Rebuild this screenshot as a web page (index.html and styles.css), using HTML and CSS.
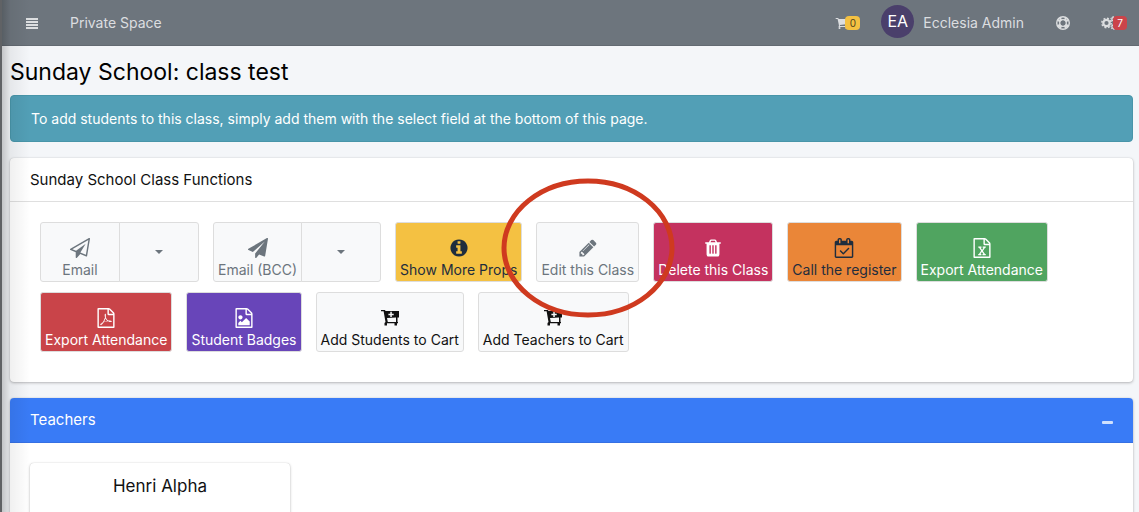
FILE: index.html
```html
<!DOCTYPE html>
<html lang="en">
<head>
<meta charset="utf-8">
<title>Sunday School: class test</title>
<link rel="stylesheet" href="styles.css">
</head>
<body>
<svg class="sprite" aria-hidden="true">
  <symbol id="plane-o" viewBox="0 0 1792 1792"><path d="M1764 11q33 24 27 64l-256 1536q-5 29-32 45-14 8-31 8-11 0-24-5l-527-215-298 327q-18 21-47 21-14 0-23-4-19-7-30-23.500t-11-36.500v-452l-472-193q-37-14-40-55-3-39 32-59l1664-960q35-21 68 2zm-342 1499l221-1323-1434 827 336 137 863-639-478 797z"/></symbol>
  <symbol id="plane" viewBox="0 0 1792 1792"><path d="M1764 11q33 24 27 64l-256 1536q-5 29-32 45-14 8-31 8-11 0-24-5l-453-185-242 295q-18 23-49 23-13 0-22-4-19-7-30.500-23.500t-11.500-36.500v-349l864-1059-1069 925-395-162q-37-14-40-55-2-40 32-59l1664-960q15-9 32-9 20 0 36 11z"/></symbol>
  <symbol id="info" viewBox="0 0 1792 1792"><path d="M1152 1376v-160q0-14-9-23t-23-9h-96v-512q0-14-9-23t-23-9h-320q-14 0-23 9t-9 23v160q0 14 9 23t23 9h96v320h-96q-14 0-23 9t-9 23v160q0 14 9 23t23 9h448q14 0 23-9t9-23zm-128-896v-160q0-14-9-23t-23-9h-192q-14 0-23 9t-9 23v160q0 14 9 23t23 9h192q14 0 23-9t9-23zm640 416q0 209-103 385.500t-279.500 279.500-385.500 103-385.500-103-279.500-279.500-103-385.500 103-385.500 279.500-279.500 385.500-103 385.500 103 279.500 279.500 103 385.500z"/></symbol>
  <symbol id="pencil" viewBox="0 0 1792 1792"><path d="M491 1536l91-91-235-235-91 91v107h128v128h107zm523-928q0-22-22-22-10 0-17 7l-542 542q-7 7-7 17 0 22 22 22 10 0 17-7l542-542q7-7 7-17zm-54-192l416 416-832 832h-416v-416zm683 96q0 53-37 90l-166 166-416-416 166-165q36-38 90-38 53 0 91 38l235 234q37 39 37 91z"/></symbol>
  <symbol id="trash" viewBox="0 0 1792 1792"><path d="M704 1376v-704q0-14-9-23t-23-9h-64q-14 0-23 9t-9 23v704q0 14 9 23t23 9h64q14 0 23-9t9-23zm256 0v-704q0-14-9-23t-23-9h-64q-14 0-23 9t-9 23v704q0 14 9 23t23 9h64q14 0 23-9t9-23zm256 0v-704q0-14-9-23t-23-9h-64q-14 0-23 9t-9 23v704q0 14 9 23t23 9h64q14 0 23-9t9-23zm-544-992h448l-48-117q-7-9-17-11h-317q-10 2-17 11zm928 32v64q0 14-9 23t-23 9h-96v948q0 83-47 143.500t-113 60.500h-832q-66 0-113-58.500t-47-141.500v-952h-96q-14 0-23-9t-9-23v-64q0-14 9-23t23-9h309l70-167q15-37 54-63t79-26h320q40 0 79 26t54 63l70 167h309q14 0 23 9t9 23z"/></symbol>
  <symbol id="calendar" viewBox="-64 0 1792 1792"><path d="M1303 964l-512 512q-10 9-23 9t-23-9l-288-288q-9-10-9-23t9-22l46-46q9-9 22-9t23 9l220 220 444-444q10-9 23-9t22 9l46 46q9 9 9 22t-9 23zm-1175 700h1408v-1024h-1408v1024zm384-1216v-288q0-14-9-23t-23-9h-64q-14 0-23 9t-9 23v288q0 14 9 23t23 9h64q14 0 23-9t9-23zm768 0v-288q0-14-9-23t-23-9h-64q-14 0-23 9t-9 23v288q0 14 9 23t23 9h64q14 0 23-9t9-23zm384-64v1280q0 52-38 90t-90 38h-1408q-52 0-90-38t-38-90v-1280q0-52 38-90t90-38h128v-96q0-66 47-113t113-47h64q66 0 113 47t47 113v96h384v-96q0-66 47-113t113-47h64q66 0 113 47t47 113v96h128q52 0 90 38t38 90z"/></symbol>
  <symbol id="excel" viewBox="0 0 1792 1792"><path d="M1596 380q28 28 48 76t20 88v1152q0 40-28 68t-68 28h-1344q-40 0-68-28t-28-68v-1600q0-40 28-68t68-28h896q40 0 88 20t76 48zm-444-244v376h376q-10-29-22-41l-313-313q-12-12-41-22zm384 1528v-1024h-416q-40 0-68-28t-28-68v-416h-768v1536h1280zm-979-234v106h281v-106h-75l103-161q5-7 10-16.500t7.500-13.500 3.500-4h2q1 4 5 10 2 4 4.500 7.500t6 8 6.500 8.500l107 161h-76v106h291v-106h-68l-192-273 195-282h67v-107h-279v107h74l-103 159q-4 7-10 16.500t-9 13.500l-2 3h-2q-1-4-5-10-6-11-17-23l-106-159h76v-107h-290v107h68l189 272-194 283h-68z"/></symbol>
  <symbol id="pdf" viewBox="0 0 1792 1792"><path d="M1596 380q28 28 48 76t20 88v1152q0 40-28 68t-68 28h-1344q-40 0-68-28t-28-68v-1600q0-40 28-68t68-28h896q40 0 88 20t76 48zm-444-244v376h376q-10-29-22-41l-313-313q-12-12-41-22zm384 1528v-1024h-416q-40 0-68-28t-28-68v-416h-768v1536h1280zm-514-593q33 26 84 56 59-7 117-7 147 0 177 49 16 22 2 52 0 1-1 2l-2 2v1q-6 38-71 38-48 0-115-20t-130-53q-221 24-392 83-153 262-242 262-15 0-28-7l-24-12q-1-1-6-5-10-10-6-36 9-40 56-91.500t132-96.500q14-9 23 6 2 2 2 4 52-85 107-197 68-136 104-262-24-82-30.500-159.500t6.500-127.500q11-40 42-40h22q23 0 35 15 18 21 9 68-2 6-4 8 1 3 1 8v30q-2 123-14 192 55 164 146 238zm-576 411q52-24 137-158-51 40-87.500 84t-49.500 74zm398-920q-15 42-2 132 1-7 7-44 0-3 7-43 1-4 4-8-1-1-1-2-1-2-1-3-1-22-13-36 0 1-1 2v2zm-124 661q135-54 284-81-2-1-13-9.500t-16-13.500q-76-67-127-176-27 86-83 197-30 56-45 83zm646-16q-24-24-140-24 76 28 124 28 14 0 18-1 0-1-2-3z"/></symbol>
  <symbol id="image" viewBox="0 0 1792 1792"><path d="M1596 380q28 28 48 76t20 88v1152q0 40-28 68t-68 28h-1344q-40 0-68-28t-28-68v-1600q0-40 28-68t68-28h896q40 0 88 20t76 48zm-444-244v376h376q-10-29-22-41l-313-313q-12-12-41-22zm384 1528v-1024h-416q-40 0-68-28t-28-68v-416h-768v1536h1280zm-128-448v320h-1024v-192l192-192 128 128 384-384zm-832-192q-80 0-136-56t-56-136 56-136 136-56 136 56 56 136-56 136-136 56z"/></symbol>
  <symbol id="cart" viewBox="0 0 1792 1792"><path d="M704 1536q0 52-38 90t-90 38-90-38-38-90 38-90 90-38 90 38 38 90zm896 0q0 52-38 90t-90 38-90-38-38-90 38-90 90-38 90 38 38 90zm128-1088v512q0 24-16.500 42.500t-40.500 21.500l-1044 122q13 60 13 70 0 16-24 64h920q26 0 45 19t19 45-19 45-45 19h-1024q-26 0-45-19t-19-45q0-11 8-31.500t16-36 21.500-40 15.500-29.500l-177-823h-204q-26 0-45-19t-19-45 19-45 45-19h256q16 0 28.500 6.500t19.500 15.500 13 24.500 8 26 5.500 29.500 4.500 26h1201q26 0 45 19t19 45z"/></symbol>
  <symbol id="cart-plus" viewBox="0 0 20 20"><path fill-rule="evenodd" d="M1 2h4l.5 1H19v6.500h-1.500V14H18v1.300h-1V17.500h-2.500v-2.200H7V17.500H4.500V15l1-1L3.600 3.300H1zM7 10l.8 4H16V9.600zM10.300 3.800v1.900H8.400v1.500h1.900V9h1.500V7.200h1.900V5.700h-1.900V3.800z"/></symbol>
</svg>

<nav class="navbar">
  <button class="nav-item menu" aria-label="Toggle menu"><svg class="icon-bars" viewBox="0 0 12 11"><path d="M0 0h12v2H0zM0 3h12v2H0zM0 6h12v2H0zM0 9h12v2H0z"/></svg></button>
  <a class="nav-item brand" href="#">Private Space</a>
  <div class="nav-right">
    <a class="nav-item cart-link" href="#" aria-label="Cart"><svg class="icon-nav"><use href="#cart"/></svg><span class="badge badge-warning">0</span></a>
    <a class="nav-item user" href="#"><span class="avatar">EA</span>Ecclesia Admin</a>
    <a class="nav-item help" href="#" aria-label="Support"><svg class="icon-ring" viewBox="0 0 14 14"><g fill="none" stroke="currentColor"><circle cx="7" cy="7" r="6.300" stroke-width="1.400"/><circle cx="7" cy="7" r="3.300" stroke-width="1.300"/><path stroke-width="2" d="M4 1.600l1.200 3M1.600 4l3 1.200M10 1.600L8.800 4.600M12.400 4l-3 1.200M4 12.400l1.200-3M1.600 10l3-1.200M10 12.400L8.800 9.400M12.400 10l-3-1.200"/></g></svg></a>
    <a class="nav-item settings" href="#" aria-label="Settings"><svg class="icon-cogs" viewBox="0 0 16 14"><g fill="none" stroke="currentColor"><circle cx="5.500" cy="7" r="3.200" stroke-width="2.200"/><circle cx="5.500" cy="7" r="4.700" stroke-width="1.500" stroke-dasharray="1.900 1.791"/><circle cx="12.500" cy="3.200" r="1.700" stroke-width="1.300"/><circle cx="12.500" cy="3.200" r="2.700" stroke-width="1" stroke-dasharray="1.400 1.427"/><circle cx="12.500" cy="10.800" r="1.700" stroke-width="1.300"/><circle cx="12.500" cy="10.800" r="2.700" stroke-width="1" stroke-dasharray="1.400 1.427"/></g></svg><span class="badge badge-danger">7</span></a>
  </div>
</nav>

<main class="content">
  <h1 class="page-title">Sunday School: class test</h1>
  <div class="alert">To add students to this class, simply add them with the select field at the bottom of this page.</div>

  <section class="card functions">
    <h2 class="card-header">Sunday School Class Functions</h2>
    <div class="toolbar">
      <div class="split">
        <button class="app-btn muted email"><svg class="icon"><use href="#plane-o"/></svg>Email</button>
        <button class="app-btn muted toggle" aria-label="Email options"><span class="caret"></span></button>
      </div>
      <div class="split">
        <button class="app-btn muted"><svg class="icon"><use href="#plane"/></svg>Email (BCC)</button>
        <button class="app-btn muted toggle" aria-label="Email BCC options"><span class="caret"></span></button>
      </div>
      <button class="app-btn yellow"><svg class="icon"><use href="#info"/></svg>Show More Props</button>
      <div class="marked">
        <button class="app-btn muted"><svg class="icon"><use href="#pencil"/></svg>Edit this Class</button>
        <svg class="ring" viewBox="0 0 174 140" aria-hidden="true"><ellipse cx="87" cy="70" rx="84" ry="67" fill="none" stroke="#cf3a1f" stroke-width="5"/></svg>
      </div>
      <button class="app-btn maroon"><svg class="icon"><use href="#trash"/></svg>Delete this Class</button>
      <button class="app-btn orange"><svg class="icon"><use href="#calendar"/></svg>Call the register</button>
      <button class="app-btn green"><svg class="icon"><use href="#excel"/></svg>Export Attendance</button>
      <button class="app-btn red"><svg class="icon"><use href="#pdf"/></svg>Export Attendance</button>
      <button class="app-btn purple"><svg class="icon"><use href="#image"/></svg>Student Badges</button>
      <button class="app-btn"><svg class="icon"><use href="#cart-plus"/></svg>Add Students to Cart</button>
      <button class="app-btn"><svg class="icon"><use href="#cart-plus"/></svg>Add Teachers to Cart</button>
    </div>
  </section>

  <section class="card">
    <div class="card-header primary"><h2 class="card-title">Teachers</h2><button class="collapse" aria-label="Collapse"><span class="minus"></span></button></div>
    <div class="people"><article class="card person">Henri Alpha</article></div>
  </section>
</main>
<div class="edge"></div>
</body>
</html>
```
FILE: styles.css
```css
* { box-sizing: border-box; }
body {
  margin: 0;
  height: 100vh;
  overflow: hidden;
  position: relative;
  background: #f4f6f9;
  color: #111;
  font: 15px/24px Inter, "Liberation Sans", sans-serif;
}
button { font: inherit; color: inherit; margin: 0; cursor: pointer; }
a { color: inherit; text-decoration: none; }
h1, h2 { margin: 0; font-weight: 400; }
svg { fill: currentColor; display: block; }
.sprite { position: absolute; width: 0; height: 0; }

.navbar {
  display: flex;
  align-items: center;
  height: 46px;
  padding: 1px 12px 0 26px;
  background: #6d757d;
  border-bottom: 1px solid #636a72;
  color: #dcdee0;
  font-size: 14px;
}
.nav-item { display: flex; align-items: center; }
.menu { border: 0; background: none; padding: 0; margin-right: 32px; }
.icon-bars { width: 12px; height: 11px; }
.nav-right { display: flex; align-items: center; margin-left: auto; }
.icon-nav { width: 14px; height: 14px; }
.badge {
  width: 15px;
  height: 14px;
  margin-left: -4px;
  border-radius: 4px;
  font-size: 10px;
  line-height: 14px;
  text-align: center;
}
.badge-warning { background: #f4c142; color: #52451f; }
.badge-danger { background: #cb444a; color: #fff; width: 14px; }
.cart-link { margin-right: 21px; }
.user { gap: 9px; margin-right: 32px; }
.avatar {
  width: 33px;
  height: 33px;
  margin-bottom: 4px;
  border-radius: 50%;
  background: #4a3f6b;
  color: #fff;
  font-size: 16px;
  line-height: 33px;
  text-align: center;
}
.help { margin-right: 31px; }
.icon-ring { width: 14px; height: 14px; }
.icon-cogs { width: 16px; height: 14px; }

.content { padding: 12px 6px 0 10px; }
.page-title { font-size: 23px; line-height: 28px; color: #000; }
.alert {
  margin: 9px 0 16px;
  padding: 12px 20px;
  border: 1px solid #4895a9;
  border-radius: 4px;
  background: #529fb6;
  color: #fff;
  font-size: 14px;
  line-height: 21px;
}
.card {
  margin-bottom: 16px;
  border-radius: 4px;
  background: #fff;
  box-shadow: 0 0 1px rgba(0, 0, 0, .2), 0 1px 3px rgba(0, 0, 0, .25);
}
.card-header {
  padding: 10px 20px;
  border-bottom: 1px solid #dfdfdf;
  font-size: 15px;
  line-height: 23px;
}
.toolbar {
  display: flex;
  flex-wrap: wrap;
  gap: 10px 14px;
  padding: 20px 30px 30px;
}
.split { display: flex; }
.app-btn {
  display: flex;
  flex-direction: column;
  align-items: center;
  gap: 2px;
  height: 60px;
  padding: 15px 4px 0;
  border: 1px solid #ddd;
  border-radius: 3px;
  background: #f8f9fa;
  color: #111;
  font-size: 14px;
  line-height: 20px;
  white-space: nowrap;
}
.icon { width: 20px; height: 20px; }
.muted { color: #6c757d; }
.email { width: 80px; }
.split .app-btn:first-child { border-radius: 3px 0 0 3px; }
.split .toggle {
  width: 80px;
  margin-left: -1px;
  padding: 0;
  justify-content: center;
  border-radius: 0 3px 3px 0;
}
.caret { border: 4px solid transparent; border-top-color: currentColor; border-bottom: 0; }
.yellow { background: #f4c142; color: #1f2d3d; }
.maroon { background: #c4325f; color: #fff; }
.orange { background: #ea8638; color: #1f2d3d; }
.green { background: #50a460; color: #fff; }
.red { background: #c94449; color: #fff; }
.purple { background: #6845b9; color: #fff; }
.marked { position: relative; }
.ring {
  position: absolute;
  z-index: 2;
  left: 50%;
  top: -44px;
  width: 174px;
  height: 140px;
  margin-left: -87px;
  pointer-events: none;
}
.primary {
  display: flex;
  align-items: center;
  justify-content: space-between;
  border-bottom-color: #3670e3;
  border-radius: 4px 4px 0 0;
  background: #397bf6;
  color: #fff;
}
.card-title { font-size: 15px; line-height: 24px; }
.collapse { border: 0; background: none; padding: 5px 0 0; }
.minus { display: block; width: 11px; height: 3px; border-radius: 1px; background: #cfe0fd; }
.people { padding: 20px; }
.person { width: 260px; padding: 11px 10px 60px; font-size: 17px; text-align: center; }
.edge {
  position: absolute;
  inset: 0 auto 0 0;
  width: 30px;
  border-left: 2px solid #606265;
  background: linear-gradient(90deg, rgba(0, 0, 0, .2), rgba(0, 0, 0, .06) 30%, transparent);
  pointer-events: none;
}
```
